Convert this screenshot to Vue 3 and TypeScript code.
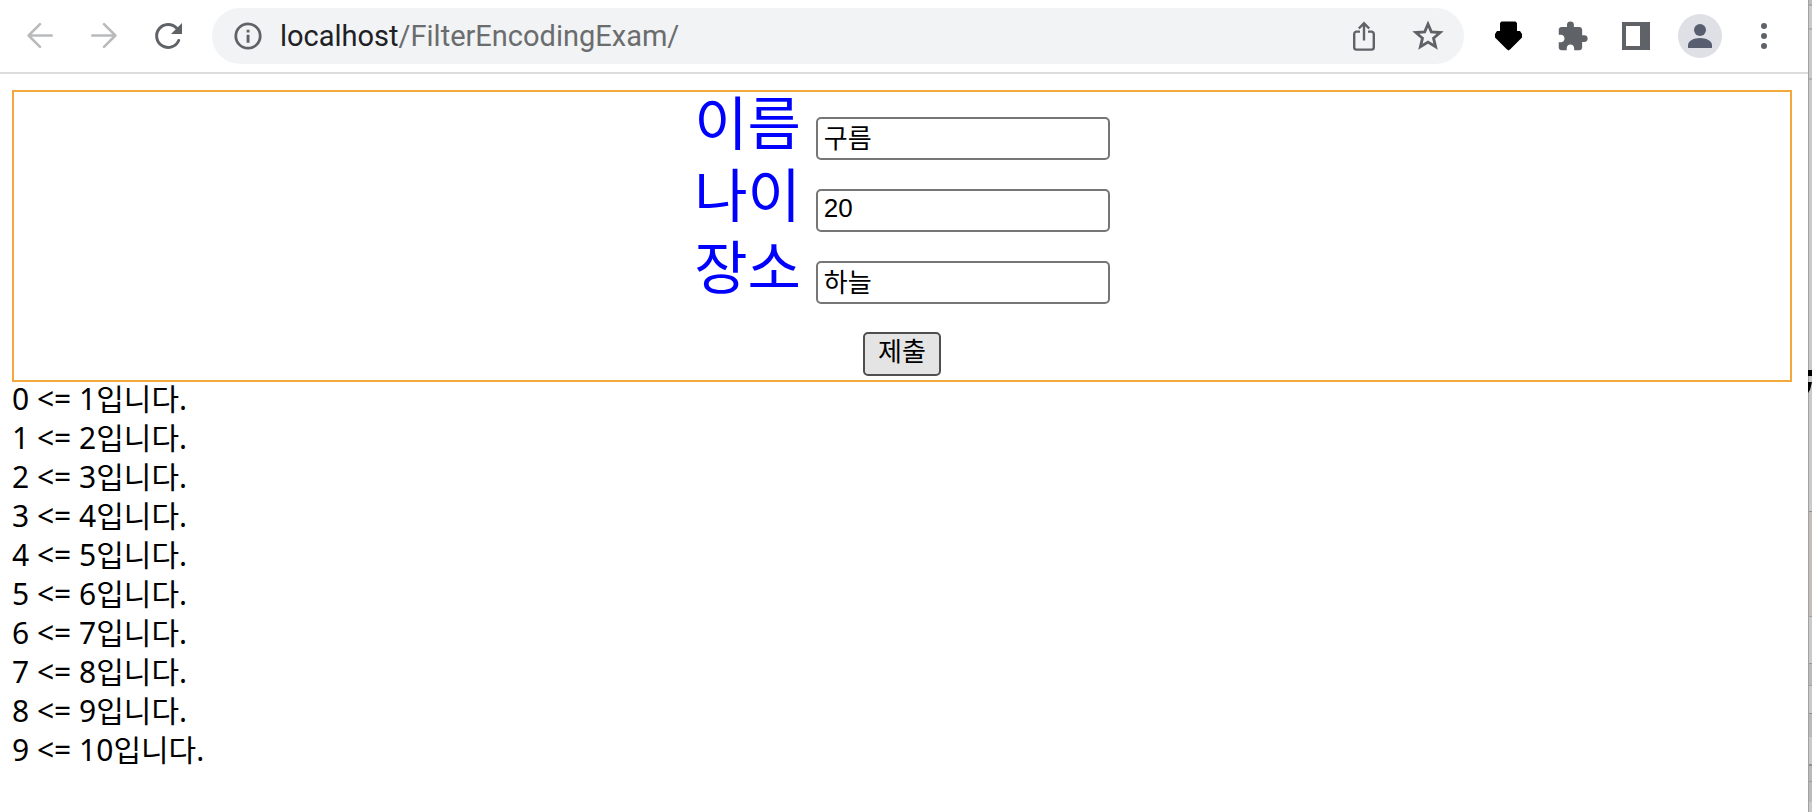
<script setup lang="ts">
import { ref } from 'vue'

interface Field {
  id: string
  label: string
  value: string
}

interface Band {
  y: number
  height: number
  fill: string
}

const fields = ref<Field[]>([
  { id: 'name', label: '이름', value: '구름' },
  { id: 'age', label: '나이', value: '20' },
  { id: 'place', label: '장소', value: '하늘' },
])

const lines: string[] = Array.from({ length: 10 }, (_, i) => `${i} <= ${i + 1}입니다.`)

const bands: Band[] = [
  { y: 0, height: 812, fill: '#cacaca' },
  { y: 0, height: 4, fill: '#bdbdbd' },
  { y: 4, height: 2, fill: '#a9a9a9' },
  { y: 28, height: 2, fill: '#b0b0b0' },
  { y: 78, height: 2, fill: '#b0b0b0' },
  { y: 511, height: 105, fill: '#c4bebb' },
  { y: 511, height: 1, fill: '#8f8f8f' },
  { y: 616, height: 1, fill: '#a0a0a0' },
  { y: 663, height: 22, fill: '#b9b9b9' },
  { y: 663, height: 1, fill: '#999999' },
  { y: 685, height: 1, fill: '#a0a0a0' },
  { y: 713, height: 24, fill: '#b9b9b9' },
  { y: 713, height: 1, fill: '#909090' },
  { y: 764, height: 38, fill: '#b9b9b9' },
  { y: 764, height: 2, fill: '#909090' },
  { y: 781, height: 1, fill: '#9c9c9c' },
]
</script>

<template>
  <div class="desktop">
    <div class="window">
      <header class="toolbar">
        <nav class="group">
          <button class="tool" type="button" aria-label="Back">
            <svg width="32" height="32" viewBox="0 0 32 32" fill="none" stroke="#b9babc" stroke-width="2.6" stroke-linecap="round" stroke-linejoin="round">
              <path d="M27.7 15.5H4.6M16 4.2 4.6 15.5 16 26.8" />
            </svg>
          </button>
          <button class="tool" type="button" aria-label="Forward">
            <svg width="32" height="32" viewBox="0 0 32 32" fill="none" stroke="#b9babc" stroke-width="2.6" stroke-linecap="round" stroke-linejoin="round">
              <path d="M4.3 15.5h23.1M16 4.2l11.4 11.3L16 26.8" />
            </svg>
          </button>
          <button class="tool" type="button" aria-label="Reload">
            <svg width="32" height="32" viewBox="0 0 32 32">
              <path d="M26.7 20.5A11.5 11.5 0 1 1 24.5 8" fill="none" stroke="#5f6368" stroke-width="3" stroke-linecap="round" />
              <path d="M30 3v11H19z" fill="#5f6368" />
            </svg>
          </button>
        </nav>

        <div class="address">
          <button class="info" type="button" aria-label="Site information">
            <svg width="28" height="28" viewBox="0 0 28 28">
              <circle cx="14" cy="14" r="12.2" fill="none" stroke="#5f6368" stroke-width="2.8" />
              <path d="M12.6 7.8h2.9v2.8h-2.900zM12.600 12.800h2.900v8h-2.900z" fill="#5f6368" />
            </svg>
          </button>
          <div class="url"><span class="host">localhost</span>/FilterEncodingExam/</div>
          <button class="tool" type="button" aria-label="Share">
            <svg width="32" height="32" viewBox="0 0 32 32" fill="none" stroke="#5f6368" stroke-width="2.4">
              <path d="M12 11.600H8.600a2.400 2.400 0 0 0-2.400 2.400v13.200a2.400 2.400 0 0 0 2.400 2.400h14.800a2.400 2.400 0 0 0 2.400-2.400V14a2.400 2.400 0 0 0-2.400-2.400H20M16 20.500V4M10.800 8.500 16 3.300l5.200 5.200" />
            </svg>
          </button>
          <button class="tool" type="button" aria-label="Bookmark this page">
            <svg width="32" height="32" viewBox="0 0 32 32" fill="none" stroke="#5f6368" stroke-width="2.8">
              <path d="m16 4 3.300 7.800 8.900.7-6.700 5.700 2.100 8.600-7.600-4.700-7.600 4.700 2.100-8.600-6.700-5.700 8.900-.7z" />
            </svg>
          </button>
        </div>

        <div class="group">
          <button class="tool" type="button" aria-label="Downloader extension">
            <svg width="32" height="32" viewBox="0 0 32 32">
              <path d="M9.500 1.500h14l1.500 1.500v8h3l2 3v3.500L18.500 29l-2 1.500-2-1.500L3 17.500V14l2-3h3V3z" fill="#000" />
            </svg>
          </button>
          <button class="tool" type="button" aria-label="Extensions">
            <svg width="33" height="33" viewBox="0 0 24 24">
              <path d="M20.500 11H19V7c0-1.100-.9-2-2-2h-4V3.500a2.500 2.500 0 0 0-5 0V5H4c-1.100 0-2 .9-2 2v3.800h1.500c1.500 0 2.700 1.200 2.700 2.700S5 16.200 3.500 16.200H2V20c0 1.100.9 2 2 2h3.800v-1.500c0-1.500 1.200-2.700 2.700-2.700s2.700 1.200 2.700 2.700V22H17c1.100 0 2-.9 2-2v-4h1.500a2.500 2.500 0 0 0 0-5z" fill="#5f6368" />
            </svg>
          </button>
          <button class="tool" type="button" aria-label="Side panel">
            <svg width="28" height="28" viewBox="0 0 28 28">
              <path d="M0 0h28v28H0zM4 4v20h14V4z" fill="#5f6368" fill-rule="evenodd" />
            </svg>
          </button>
          <button class="tool" type="button" aria-label="Profile">
            <svg width="44" height="44" viewBox="0 0 44 44">
              <circle cx="22" cy="22" r="22" fill="#dfe0e5" />
              <circle cx="22" cy="16" r="6" fill="#565e70" />
              <path d="M10 34v-3c0-4.200 6-7 12-7s12 2.800 12 7v3z" fill="#565e70" />
            </svg>
          </button>
          <button class="tool" type="button" aria-label="Menu">
            <svg width="32" height="32" viewBox="0 0 32 32" fill="#5f6368">
              <circle cx="16" cy="6" r="3" />
              <circle cx="16" cy="16" r="3" />
              <circle cx="16" cy="26" r="3" />
            </svg>
          </button>
        </div>
      </header>

      <main class="page">
        <form class="form" @submit.prevent>
          <div v-for="field in fields" :key="field.id" class="row">
            <label class="label" :for="field.id">{{ field.label }}</label>
            <input :id="field.id" v-model="field.value" class="field" type="text" />
          </div>
          <div class="row">
            <button class="submit" type="submit">제출</button>
          </div>
        </form>
        <div class="output">
          <div v-for="line in lines" :key="line" class="line">{{ line }}</div>
        </div>
      </main>
    </div>

    <svg class="backdrop" viewBox="0 0 4 812" preserveAspectRatio="none" aria-hidden="true">
      <rect v-for="(band, i) in bands" :key="i" x="0" :y="band.y" width="4" :height="band.height" :fill="band.fill" />
      <rect x="0" y="0" width="1" height="812" fill="#a2a2a2" />
      <path d="M0 370h4v6H0zM0 382h4l-2 8-2 3z" fill="#000" />
    </svg>
  </div>
</template>

<style>
body {
  margin: 0;
  background: #fff;
}
</style>

<style scoped>
.desktop {
  display: flex;
  min-height: 100vh;
}

.window {
  flex: 1;
  min-width: 0;
  background: #fff;
}

.backdrop {
  display: block;
  width: 4px;
  height: 100vh;
}

.toolbar {
  display: flex;
  align-items: center;
  gap: 12px;
  height: 72px;
  padding: 0 12px 0 8px;
  border-bottom: 2px solid #dcdcdc;
}

.group {
  display: flex;
}

.tool,
.info {
  display: flex;
  align-items: center;
  justify-content: center;
  width: 64px;
  height: 56px;
  padding: 0;
  border: 0;
  background: none;
}

.info {
  width: 28px;
}

.address {
  display: flex;
  flex: 1;
  align-items: center;
  min-width: 0;
  height: 56px;
  padding: 0 4px 0 22px;
  border-radius: 28px;
  background: #f1f3f4;
}

.url {
  flex: 1;
  padding-left: 18px;
  font: 29px/56px Roboto, "Liberation Sans", sans-serif;
  color: #6b6c6e;
  white-space: nowrap;
}

.host {
  color: #202124;
}

.page {
  padding: 16px 16px 0 12px;
}

.form {
  border: 2px solid #f2a83b;
}

.row {
  display: flex;
  align-items: flex-end;
  justify-content: center;
  gap: 15px;
  box-sizing: border-box;
  height: 72px;
  padding-bottom: 4px;
}

.label {
  font: 58px/70px "Liberation Sans", "Noto Sans CJK KR", sans-serif;
  color: #00f;
}

.field {
  box-sizing: border-box;
  width: 294px;
  height: 43px;
  padding: 0 6px 5px;
  border: 2px solid #767676;
  border-radius: 5px;
  background: #fff;
  color: #000;
  font: 26px/34px "Liberation Sans", "Noto Sans CJK KR", sans-serif;
}

.submit {
  box-sizing: border-box;
  height: 44px;
  padding: 0 13px 4px;
  border: 2px solid #4f4f4f;
  border-radius: 5px;
  background: #e4e4e4;
  color: #000;
  font: 26px/36px "Liberation Sans", "Noto Sans CJK KR", sans-serif;
}

.output {
  color: #000;
  font: 30px/33px "Noto Sans", "Noto Sans CJK KR", sans-serif;
}

.line {
  padding-bottom: 6px;
}
</style>
